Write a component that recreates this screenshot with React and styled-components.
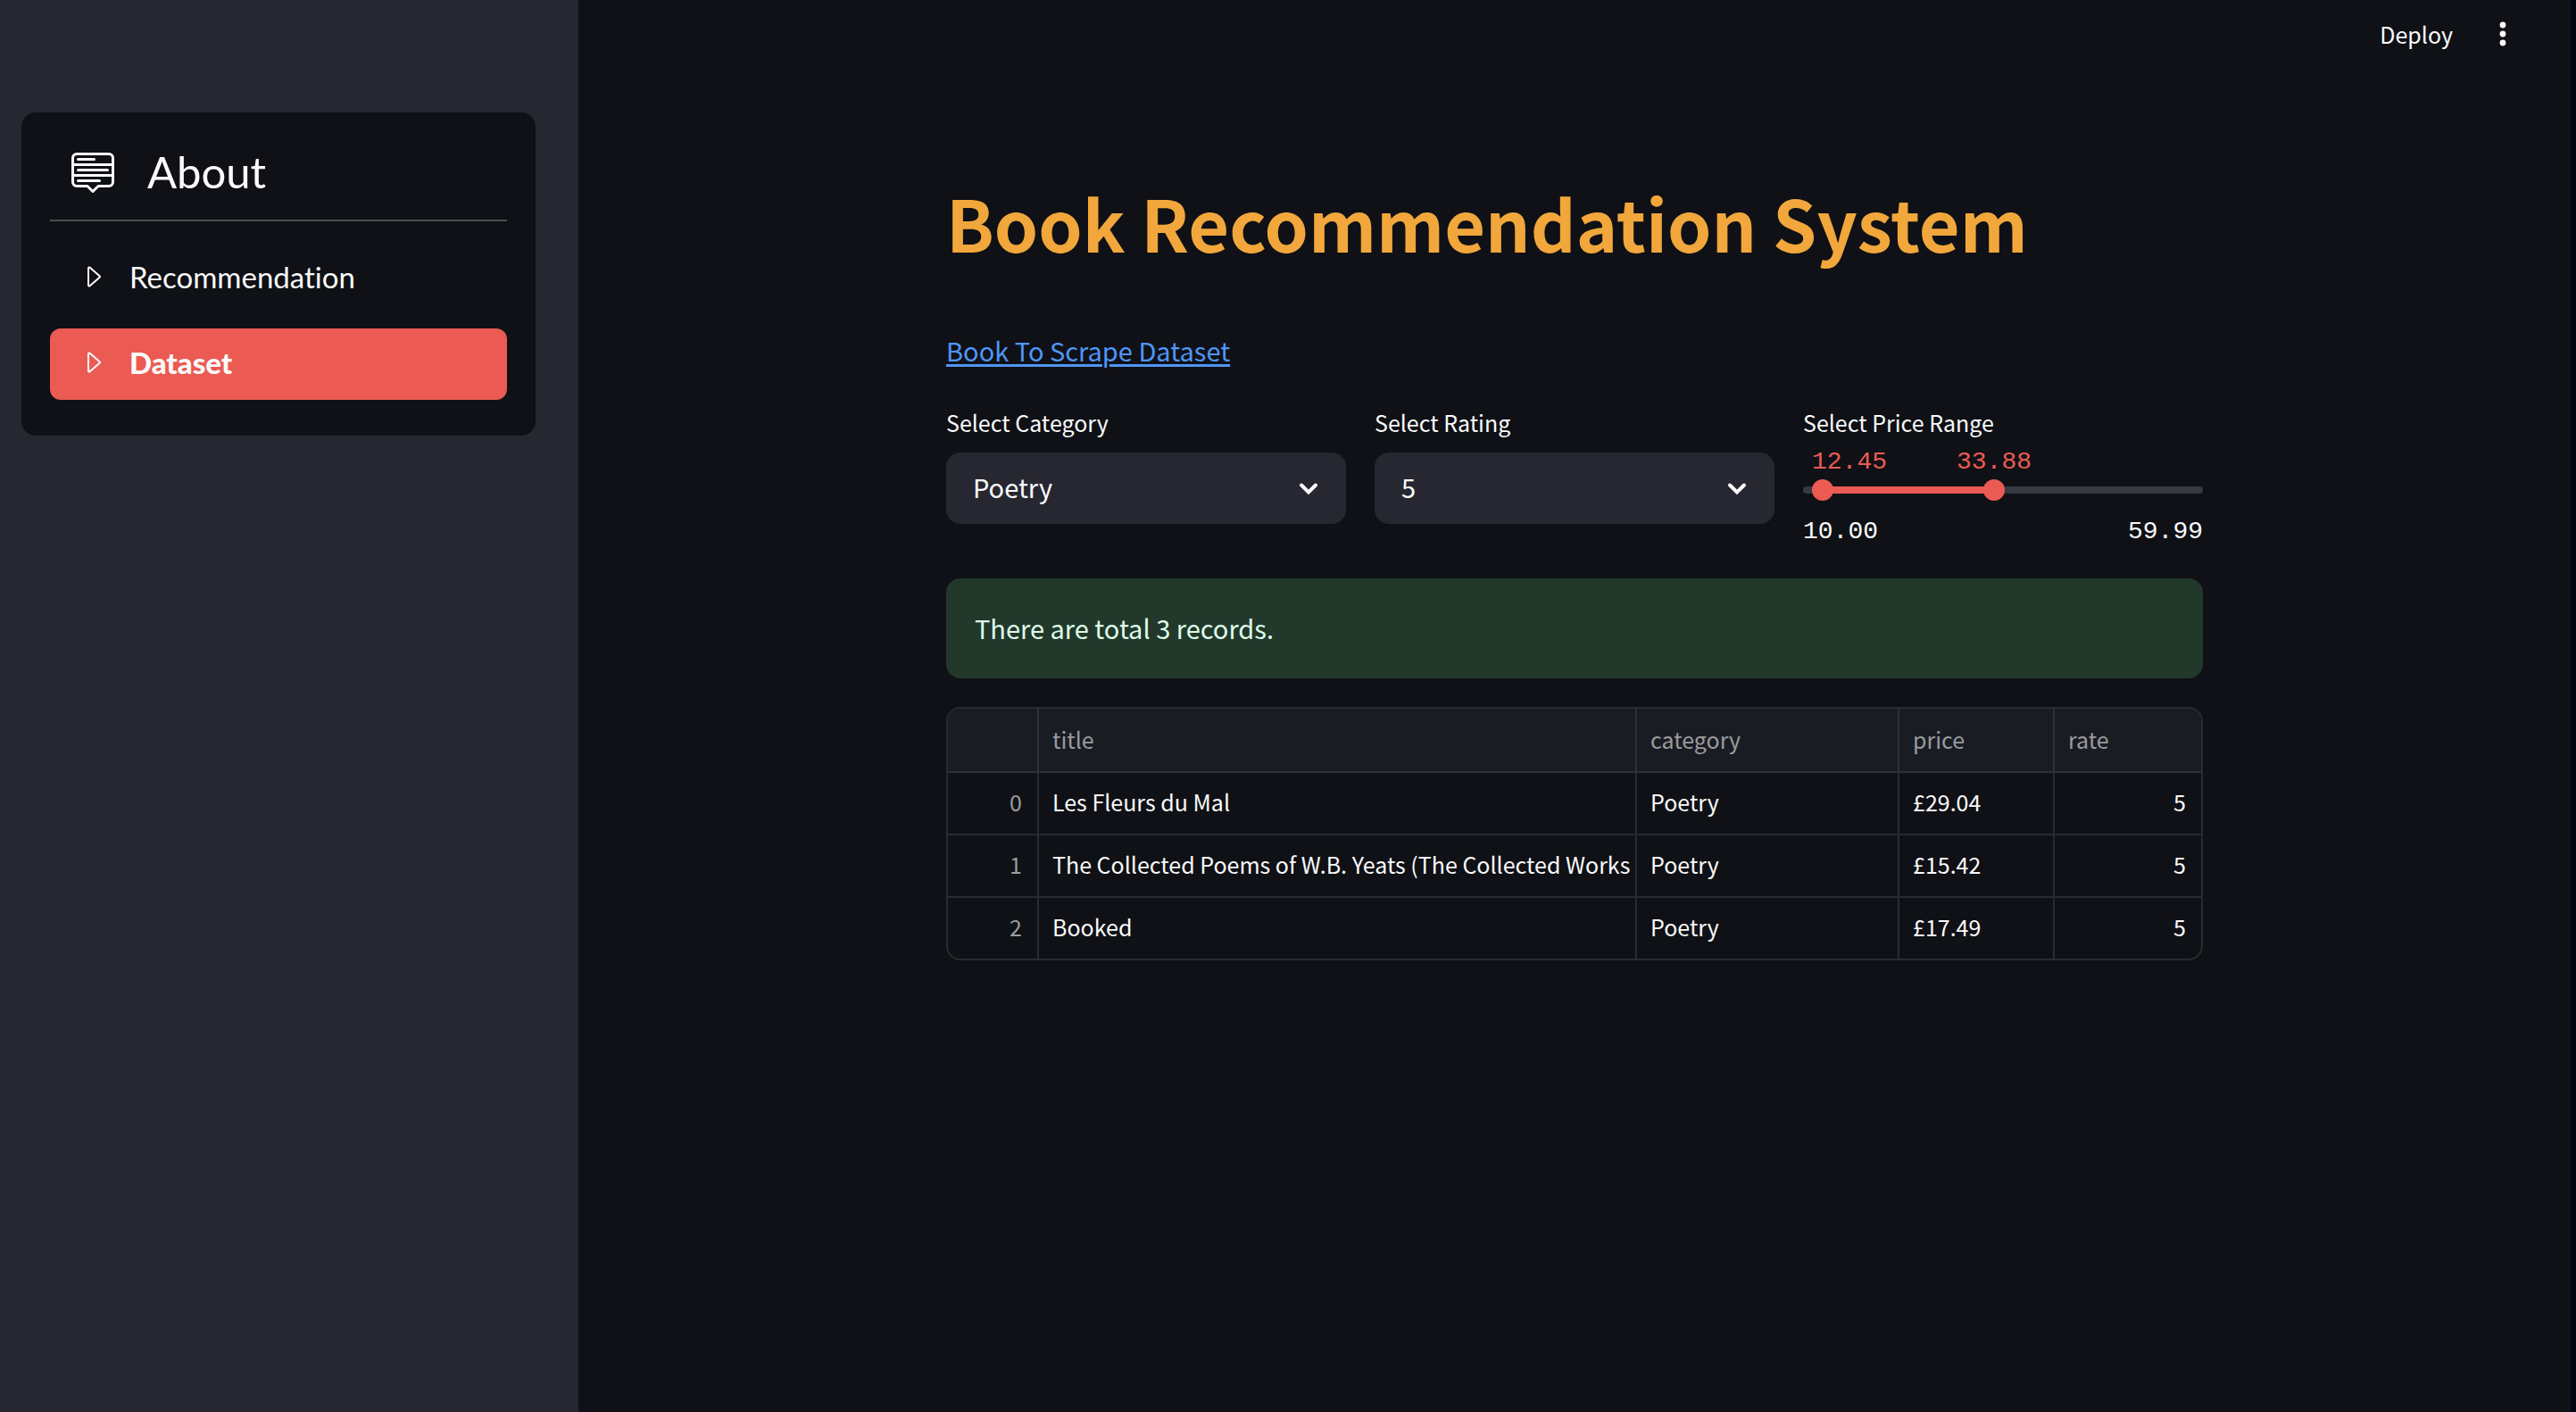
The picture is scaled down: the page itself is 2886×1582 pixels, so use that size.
import React, { useState } from "react";
import styled, { createGlobalStyle } from "styled-components";
import { BsCaretRight, BsMenuUp } from "react-icons/bs";

const colors = {
  page: "#0f1116",
  panel: "#262730",
  accent: "#eb5b53",
  text: "#fafafa",
  line: "#292b31",
};

const sans = '"Noto Sans CJK SC", "Noto Sans", sans-serif';
const nav = 'Lato, "Open Sans", sans-serif';
const mono = '"Liberation Mono", monospace';

const GlobalStyle = createGlobalStyle`
  *, *::before, *::after { box-sizing: border-box; }
  body {
    margin: 0;
    background: ${colors.page};
    color: ${colors.text};
    font-family: ${sans};
    font-size: 29px;
  }
`;

const Page = styled.div`
  display: flex;
  min-height: 100vh;
  border-right: 6px solid #020314;
`;

const Sidebar = styled.aside`
  flex: 0 0 648px;
  padding: 126px 48px 48px 24px;
  background: ${colors.panel};
`;

const MenuCard = styled.nav`
  padding: 34px 32px 40px;
  border-radius: 16px;
  background: ${colors.page};
  font-family: ${nav};
  font-variant-ligatures: none;
`;

const MenuTitle = styled.h2`
  display: flex;
  align-items: center;
  gap: 37px;
  height: 64px;
  margin: 0;
  padding-left: 24px;
  font-size: 49px;
  font-weight: 400;
`;

const Divider = styled.hr`
  height: 2px;
  margin: 22px 0 24px;
  border: 0;
  background: #4b4c50;
`;

const MenuList = styled.ul`
  display: grid;
  gap: 16px;
  margin: 0;
  padding: 0;
  list-style: none;
`;

const MenuLink = styled.a`
  display: flex;
  align-items: center;
  gap: 25px;
  height: 80px;
  padding: 0 32px 4px;
  border-radius: 12px;
  background: ${(p) => (p.$active ? colors.accent : "transparent")};
  color: ${colors.text};
  font-size: 33px;
  font-weight: ${(p) => (p.$active ? 900 : 400)};
  text-decoration: none;
`;

const Main = styled.div`
  flex: 1;
  min-width: 0;
`;

const Toolbar = styled.header`
  display: flex;
  align-items: center;
  justify-content: flex-end;
  gap: 36px;
  height: 76px;
  padding-right: 56px;
`;

const ToolButton = styled.button`
  display: flex;
  align-items: center;
  justify-content: center;
  min-width: 40px;
  height: 56px;
  padding: 0;
  border: 0;
  background: transparent;
  color: ${colors.text};
  font-family: ${sans};
  font-size: 25px;
  cursor: pointer;
`;

const Content = styled.main`
  max-width: 1408px;
  margin: 0 auto;
  padding: 118px 0 96px;
`;

const Title = styled.h1`
  margin: 0 0 64px;
  color: #f1a73b;
  font-size: 79px;
  font-weight: 700;
  line-height: 110px;
`;

const SourceLine = styled.p`
  margin: 0 0 38px;
  line-height: 48px;
`;

const SourceLink = styled.a`
  color: #5096f7;
  text-decoration: underline;
  text-decoration-thickness: 3px;
  text-underline-offset: 3px;
`;

const Filters = styled.form`
  display: grid;
  grid-template-columns: repeat(3, 1fr);
  gap: 32px;
  margin-bottom: 36px;
`;

const FieldLabel = styled.label`
  display: block;
  font-size: 25px;
  line-height: 38px;
`;

const SelectBox = styled.div`
  position: relative;
  margin-top: 15px;
`;

const Select = styled.select`
  display: block;
  width: 100%;
  height: 80px;
  padding: 0 72px 4px 30px;
  border: 0;
  border-radius: 16px;
  appearance: none;
  background: ${colors.panel};
  color: ${colors.text};
  font-family: ${sans};
  font-size: 29px;
`;

const Chevron = styled.svg`
  position: absolute;
  top: 24px;
  right: 26px;
  width: 32px;
  height: 32px;
  pointer-events: none;
`;

const RangeValues = styled.div`
  position: relative;
  height: 32px;
  margin-top: 10px;
  color: ${colors.accent};
  font-family: ${mono};
  font-size: 28px;
  line-height: 32px;
`;

const RangeValue = styled.output`
  position: absolute;
  left: max(10px, calc(var(--at) - 42px));
`;

const Track = styled.div`
  position: relative;
  height: 24px;
  margin: 3px 0 19px;

  &::before {
    content: "";
    position: absolute;
    inset: 8px 0;
    border-radius: 4px;
    background: linear-gradient(
      to right,
      #373942 var(--from),
      ${colors.accent} var(--from),
      ${colors.accent} var(--to),
      #373942 var(--to)
    );
  }
`;

const RangeInput = styled.input`
  position: absolute;
  top: 0;
  left: -12px;
  width: calc(100% + 24px);
  height: 24px;
  margin: 0;
  appearance: none;
  background: transparent;
  pointer-events: none;

  &::-webkit-slider-thumb {
    width: 24px;
    height: 24px;
    border-radius: 50%;
    appearance: none;
    background: ${colors.accent};
    pointer-events: auto;
  }
`;

const RangeLimits = styled.div`
  display: flex;
  justify-content: space-between;
  font-family: ${mono};
  font-size: 28px;
  line-height: 32px;
`;

const Notice = styled.p`
  margin: 0 0 32px;
  padding: 31px 32px 33px;
  border-radius: 16px;
  background: #22382b;
  color: #dffde9;
  line-height: 48px;
`;

const TableFrame = styled.div`
  overflow: hidden;
  border: 2px solid ${colors.line};
  border-radius: 16px;
`;

const Table = styled.table`
  width: 100%;
  border-collapse: separate;
  border-spacing: 0;
  table-layout: fixed;
  font-size: 25px;
`;

const Col = styled.col`
  width: ${(p) => (p.$width ? `${p.$width}px` : "auto")};
`;

const Cell = styled.td`
  height: 70px;
  padding: 0 17px 4px 15px;
  border-right: 2px solid ${colors.line};
  border-bottom: 2px solid ${colors.line};
  overflow: hidden;
  color: ${(p) => (p.$muted ? "#9a9b9e" : colors.text)};
  font-weight: 400;
  text-align: ${(p) => (p.$end ? "right" : "left")};
  white-space: nowrap;

  &:last-child { border-right: 0; }
  &:nth-child(2) { padding-right: 0; }
  tbody tr:last-child & { height: 68px; border-bottom: 0; }
`;

const HeadCell = styled(Cell)`
  height: 72px;
  padding-bottom: 2px;
  background: #1a1c23;
  border-color: #2f3138;
`;

const pages = ["Recommendation", "Dataset"];

const columns = [
  { key: "index", label: "", width: 102 },
  { key: "title", label: "title" },
  { key: "category", label: "category", width: 294 },
  { key: "price", label: "price", width: 174 },
  { key: "rate", label: "rate", width: 164 },
];

const books = [
  { title: "Les Fleurs du Mal", category: "Poetry", price: "£29.04", rate: 5 },
  {
    title: "The Collected Poems of W.B. Yeats (The Collected Works",
    category: "Poetry",
    price: "£15.42",
    rate: 5,
  },
  { title: "Booked", category: "Poetry", price: "£17.49", rate: 5 },
];

function SelectField({ id, label, value }) {
  return (
    <div>
      <FieldLabel htmlFor={id}>{label}</FieldLabel>
      <SelectBox>
        <Select id={id} defaultValue={value}>
          <option value={value}>{value}</option>
        </Select>
        <Chevron viewBox="0 0 32 32" fill="none" aria-hidden="true">
          <path
            d="M8 12.5 L16 20.5 L24 12.5"
            stroke={colors.text}
            strokeWidth="4"
            strokeLinecap="round"
          />
        </Chevron>
      </SelectBox>
    </div>
  );
}

function PriceRange({ min, max }) {
  const [range, setRange] = useState([12.45, 33.88]);
  const at = (value) => `${((value - min) / (max - min)) * 100}%`;
  const [low, high] = range;
  return (
    <div>
      <FieldLabel htmlFor="price-low">Select Price Range</FieldLabel>
      <RangeValues>
        <RangeValue htmlFor="price-low" style={{ "--at": at(low) }}>
          {low.toFixed(2)}
        </RangeValue>
        <RangeValue htmlFor="price-high" style={{ "--at": at(high) }}>
          {high.toFixed(2)}
        </RangeValue>
      </RangeValues>
      <Track style={{ "--from": at(low), "--to": at(high) }}>
        <RangeInput
          id="price-low"
          type="range"
          min={min}
          max={max}
          step="0.01"
          value={low}
          onChange={(e) => setRange([Math.min(+e.target.value, high), high])}
        />
        <RangeInput
          id="price-high"
          type="range"
          aria-label="Select Price Range"
          min={min}
          max={max}
          step="0.01"
          value={high}
          onChange={(e) => setRange([low, Math.max(+e.target.value, low)])}
        />
      </Track>
      <RangeLimits>
        <span>{min.toFixed(2)}</span>
        <span>{max.toFixed(2)}</span>
      </RangeLimits>
    </div>
  );
}

export default function App() {
  return (
    <>
      <GlobalStyle />
      <Page>
        <Sidebar>
          <MenuCard>
            <MenuTitle>
              <BsMenuUp size={48} />
              About
            </MenuTitle>
            <Divider />
            <MenuList>
              {pages.map((page) => (
                <li key={page}>
                  <MenuLink href="#" $active={page === "Dataset"}>
                    <BsCaretRight size={32} />
                    {page}
                  </MenuLink>
                </li>
              ))}
            </MenuList>
          </MenuCard>
        </Sidebar>
        <Main>
          <Toolbar>
            <ToolButton type="button">Deploy</ToolButton>
            <ToolButton type="button" aria-label="Menu">
              <svg width="8" height="28" viewBox="0 0 8 28" fill="currentColor">
                <circle cx="4" cy="4" r="3.4" />
                <circle cx="4" cy="14" r="3.4" />
                <circle cx="4" cy="24" r="3.4" />
              </svg>
            </ToolButton>
          </Toolbar>
          <Content>
            <Title>Book Recommendation System</Title>
            <SourceLine>
              <SourceLink href="#">Book To Scrape Dataset</SourceLink>
            </SourceLine>
            <Filters>
              <SelectField id="category" label="Select Category" value="Poetry" />
              <SelectField id="rating" label="Select Rating" value="5" />
              <PriceRange min={10} max={59.99} />
            </Filters>
            <Notice>There are total 3 records.</Notice>
            <TableFrame>
              <Table>
                <colgroup>
                  {columns.map((c) => (
                    <Col key={c.key} $width={c.width} />
                  ))}
                </colgroup>
                <thead>
                  <tr>
                    {columns.map((c) => (
                      <HeadCell as="th" key={c.key} scope="col" $muted>
                        {c.label}
                      </HeadCell>
                    ))}
                  </tr>
                </thead>
                <tbody>
                  {books.map((book, i) => (
                    <tr key={book.title}>
                      <Cell $muted $end>{i}</Cell>
                      <Cell>{book.title}</Cell>
                      <Cell>{book.category}</Cell>
                      <Cell>{book.price}</Cell>
                      <Cell $end>{book.rate}</Cell>
                    </tr>
                  ))}
                </tbody>
              </Table>
            </TableFrame>
          </Content>
        </Main>
      </Page>
    </>
  );
}
